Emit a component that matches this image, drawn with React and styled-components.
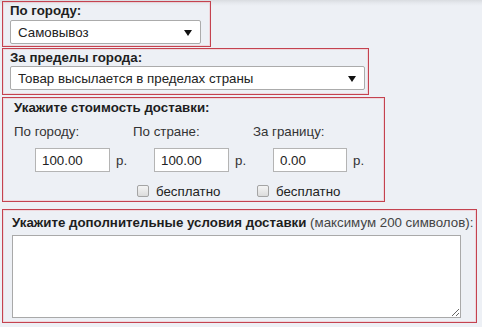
import React from 'react'
import styled, { createGlobalStyle } from 'styled-components'

const GlobalStyle = createGlobalStyle`
  html, body {
    margin: 0;
    padding: 0;
    background: #edf0f5;
  }
  body {
    font-family: "Liberation Sans", Arial, sans-serif;
    font-size: 13.3px;
    color: #222;
  }
`

const Page = styled.div`
  position: relative;
  width: 482px;
  height: 327px;
  padding: 1px 0 0 2px;
  box-sizing: border-box;
  overflow: hidden;
  background: linear-gradient(180deg, #d9dce0 0px, #e6e9ee 3px, #edf0f5 6px);
`

const Box = styled.div`
  width: ${({ w }) => w}px;
  box-sizing: border-box;
  border: 1px solid #c4424f;
  box-shadow: inset 0 0 0 1px rgba(240, 170, 175, 0.35);
  padding: ${({ pad }) => pad};
  margin-bottom: ${({ mb }) => mb || 0}px;
`

const Title = styled.div`
  font-weight: bold;
  line-height: 16px;
  color: #1e1e1e;
  white-space: nowrap;
  margin-bottom: ${({ mb }) => mb || 0}px;
`

const Note = styled.span`
  font-weight: normal;
  color: #444;
`

const SelectWrap = styled.div`
  position: relative;
  width: ${({ w }) => w}px;
  height: 24px;
`

const Select = styled.select`
  appearance: none;
  -webkit-appearance: none;
  width: 100%;
  height: 100%;
  box-sizing: border-box;
  border: 1px solid #ababab;
  border-radius: 2px;
  background: #fff;
  font-family: "Liberation Sans", Arial, sans-serif;
  font-size: 13.3px;
  color: #222;
  padding: 0 24px 0 7px;
  margin: 0;
  outline: none;
`

const Arrow = styled.span`
  position: absolute;
  right: 9px;
  top: 10px;
  width: 0;
  height: 0;
  border-left: 4px solid transparent;
  border-right: 4px solid transparent;
  border-top: 6px solid #111;
  pointer-events: none;
`

const Columns = styled.div`
  display: grid;
  grid-template-columns: 119px 120px 1fr;
`

const Col = styled.div`
  display: flex;
  flex-direction: column;
`

const Label = styled.div`
  color: #333;
  line-height: 16px;
  margin-bottom: 8px;
`

const PriceRow = styled.div`
  display: flex;
  align-items: center;
  gap: 6px;
  padding-left: ${({ indent }) => indent}px;
`

const Price = styled.input`
  width: ${({ w }) => w || 74}px;
  height: 24px;
  box-sizing: border-box;
  border: 1px solid #b4b4b4;
  background: #fff;
  font-family: "Liberation Sans", Arial, sans-serif;
  font-size: 13.3px;
  color: #222;
  padding: 0 6px;
  margin: 0;
  outline: none;
`

const Currency = styled.span`
  color: #333;
`

const Check = styled.label`
  display: flex;
  align-items: center;
  gap: 7px;
  height: 16px;
  margin-top: 11px;
  padding-left: 4px;
  color: #222;
  visibility: ${({ hidden }) => (hidden ? 'hidden' : 'visible')};
`

const Tick = styled.span`
  width: 12px;
  height: 12px;
  box-sizing: border-box;
  border: 1px solid #a4a4a4;
  border-radius: 2px;
  background: linear-gradient(180deg, #f4f4f4, #dcdcdc);
`

const TextArea = styled.textarea`
  display: block;
  width: 449px;
  height: 83px;
  box-sizing: border-box;
  border: 1px solid #a9a9a9;
  background: #fff;
  margin: 4px 0 0 0;
  resize: both;
  outline: none;
  font-family: "Liberation Sans", Arial, sans-serif;
  font-size: 13px;
`

const prices = [
  { label: 'По городу:', value: '100.00', indent: 21, w: 75, free: false },
  { label: 'По стране:', value: '100.00', indent: 21, w: 75, free: true },
  { label: 'За границу:', value: '0.00', indent: 20, w: 74, free: true },
]

export default function App() {
  return (
    <>
      <GlobalStyle />
      <Page>
        <Box w={209} pad="1px 8px 2px 7px" mb={1}>
          <Title mb={1}>По городу:</Title>
          <SelectWrap w={191}>
            <Select defaultValue="self">
              <option value="self">Самовывоз</option>
            </Select>
            <Arrow />
          </SelectWrap>
        </Box>
        <Box w={367} pad="1px 4px 4px 7px" mb={2}>
          <Title mb={0}>За пределы города:</Title>
          <SelectWrap w={355}>
            <Select defaultValue="country">
              <option value="country">Товар высылается в пределах страны</option>
            </Select>
            <Arrow />
          </SelectWrap>
        </Box>
        <Box w={383} pad="2px 8px 2px 11px" mb={7}>
          <Title mb={8}>Укажите стоимость доставки:</Title>
          <Columns>
            {prices.map((p) => (
              <Col key={p.label}>
                <Label>{p.label}</Label>
                <PriceRow indent={p.indent}>
                  <Price w={p.w} defaultValue={p.value} />
                  <Currency>р.</Currency>
                </PriceRow>
                <Check hidden={!p.free}>
                  <Tick />
                  бесплатно
                </Check>
              </Col>
            ))}
          </Columns>
        </Box>
        <Box w={475} pad="5px 8px 4px 9px">
          <Title>
            Укажите дополнительные условия доставки <Note>(максимум 200 символов):</Note>
          </Title>
          <TextArea />
        </Box>
      </Page>
    </>
  )
}
